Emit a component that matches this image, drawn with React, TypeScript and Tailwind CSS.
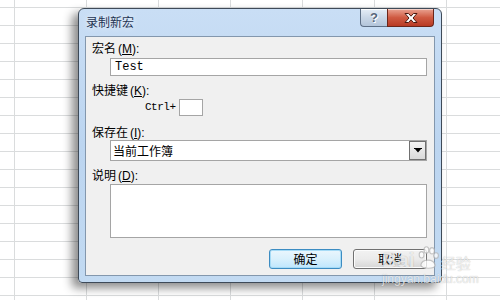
import React from 'react';

const cn = "font-['SimSun','Noto_Sans_CJK_SC',sans-serif]";

const Label: React.FC<{ text: string; hot: string }> = ({ text, hot }) => (
  <div className={`h-[14px] leading-[14px] text-[12px] text-black ${cn}`}>
    {text}
    <span className="ml-[2px] font-['Liberation_Sans',sans-serif]">(</span>
    <span className="underline font-['Liberation_Sans',sans-serif]">{hot}</span>
    <span className="font-['Liberation_Sans',sans-serif]">):</span>
  </div>
);

const TitleButtons: React.FC = () => (
  <div className="flex items-start">
    <div className="w-[27px] h-[18px] rounded-bl-[4px] border border-t-0 border-r-0 border-[#5d6f86] bg-gradient-to-b from-[#e6eef7] via-[#c9d7e7] to-[#b3c5da] flex items-center justify-center shadow-[inset_0_1px_0_rgba(255,255,255,0.8)]">
      <span className="text-[13px] font-bold leading-none text-[#56667a] font-['Liberation_Sans',sans-serif] [text-shadow:0_0_1px_#fff,1px_1px_0_#fff]">
        ?
      </span>
    </div>
    <div className="w-[47px] h-[18px] rounded-br-[4px] border border-t-0 border-[#6b2519] bg-gradient-to-b from-[#e9a392] via-[#cf5a42] to-[#b83a23] flex items-center justify-center shadow-[inset_0_1px_0_rgba(255,255,255,0.5)]">
      <svg width="14" height="10" viewBox="0 0 14 10">
        <path
          d="M1 0.5 H4.5 L7 3.2 L9.5 0.5 H13 L9 5 L13 9.5 H9.5 L7 6.8 L4.5 9.5 H1 L5 5 Z"
          fill="#fff"
          stroke="#4a1a10"
          strokeWidth="1"
          strokeLinejoin="round"
        />
      </svg>
    </div>
  </div>
);

const Button: React.FC<{ label: string; primary?: boolean; width: string }> = ({ label, primary, width }) => (
  <div
    className={`${width} h-[20px] rounded-[3px] border flex items-center justify-center text-[12px] text-black ${cn} ${
      primary
        ? 'border-[#3c8cc2] bg-gradient-to-b from-[#eaf6fd] via-[#d9f0fc] to-[#bee6fd] shadow-[inset_0_0_0_1px_#a6dbf6]'
        : 'border-[#707070] bg-gradient-to-b from-[#f2f2f2] via-[#ebebeb] to-[#d6d6d6] shadow-[inset_0_0_0_1px_#fcfcfc]'
    }`}
  >
    {label}
  </div>
);

// baidu jingyan watermark over the bottom right corner
const Watermark: React.FC = () => (
  <div className="absolute left-[382px] top-[246px] pointer-events-none select-none">
    <div className="flex items-end gap-[1px] text-white/75 [text-shadow:0_0_1px_rgba(0,0,0,0.3)]">
      <span className="text-[21px] font-bold leading-none font-['Liberation_Sans',sans-serif]">Bai</span>
      <svg width="24" height="24" viewBox="0 0 28 30" className="opacity-75">
        <g fill="#fff" stroke="#b5b5b5" strokeWidth="1.4">
          <ellipse cx="6" cy="11" rx="3" ry="4" />
          <ellipse cx="12" cy="5" rx="3" ry="4" />
          <ellipse cx="19" cy="6" rx="3" ry="4" />
          <ellipse cx="24" cy="12" rx="3" ry="3.5" />
          <path d="M5 24 C6 16 21 15 23 24 C23 29 6 29 5 24 Z" />
        </g>
      </svg>
      <span className={`text-[15px] leading-none ${cn}`}>经验</span>
    </div>
    <div className="mt-[3px] text-[12px] leading-none text-white/75 font-['Liberation_Sans',sans-serif] [text-shadow:0_0_1px_rgba(0,0,0,0.3)]">
      jingyan.baidu.com
    </div>
  </div>
);

export default function App() {
  return (
    <div className="relative w-[500px] h-[300px] overflow-hidden bg-white [background-image:linear-gradient(to_right,#dadcdd_1px,transparent_1px),linear-gradient(to_bottom,#dadcdd_1px,transparent_1px)] [background-size:72px_18px] [background-position:14px_7px] pt-[8px] pl-[78px]">
      <div className="w-[364px] h-[275px] flex flex-col rounded-t-[6px] rounded-b-[4px] border border-[#3e4a58] bg-gradient-to-b from-[#c9def5] via-[#bcd5f0] to-[#c2daf2] shadow-[-6px_5px_10px_rgba(0,0,0,0.45)]">
        <div className="h-[27px] flex justify-between pl-[7px] pr-[7px]">
          <div className={`pt-[6px] text-[12px] leading-[14px] text-[#1e3352] ${cn} [text-shadow:0_0_6px_rgba(255,255,255,0.9)]`}>
            录制新宏
          </div>
          <TitleButtons />
        </div>
        <div className="mx-[6px] h-[240px] border border-[#8397ad] bg-[#f0f0f0] flex flex-col pl-[6px] pr-[7px]">
          <div className="mt-[4px]">
            <Label text="宏名" hot="M" />
          </div>
          <div className="mt-[3px] ml-[18px] h-[18px] border border-[#a5a5a5] bg-white flex items-center pl-[4px] text-[12px] text-black font-['Liberation_Mono',monospace]">
            Test
          </div>
          <div className="mt-[7px]">
            <Label text="快捷键" hot="K" />
          </div>
          <div className="mt-[2px] h-[17px] flex items-center pl-[53px] gap-[3px]">
            <span className="text-[11px] tracking-[-0.5px] text-black font-['Liberation_Mono',monospace]">Ctrl+</span>
            <div className="w-[24px] h-[17px] border border-[#a5a5a5] bg-white" />
          </div>
          <div className="mt-[9px]">
            <Label text="保存在" hot="I" />
          </div>
          <div className="mt-[1px] ml-[18px] h-[21px] border border-[#a5a5a5] bg-white flex items-center justify-between">
            <span className={`pl-[2px] text-[12px] text-black ${cn}`}>当前工作簿</span>
            <div className="w-[17px] h-[19px] border border-[#707070] bg-gradient-to-b from-[#f4f4f4] to-[#d9d9d9] flex items-center justify-center">
              <svg width="8" height="5" viewBox="0 0 8 5">
                <path d="M0 0 H8 V1 H0 Z M1 1 H7 L4 4.5 Z" fill="#000" />
              </svg>
            </div>
          </div>
          <div className="mt-[7px]">
            <Label text="说明" hot="D" />
          </div>
          <div className="mt-[2px] ml-[18px] h-[54px] border border-[#a5a5a5] bg-white" />
          <div className="mt-[11px] flex justify-end gap-[11px]">
            <Button label="确定" primary width="w-[73px]" />
            <Button label="取消" width="w-[74px]" />
          </div>
        </div>
      </div>
      <Watermark />
    </div>
  );
}
